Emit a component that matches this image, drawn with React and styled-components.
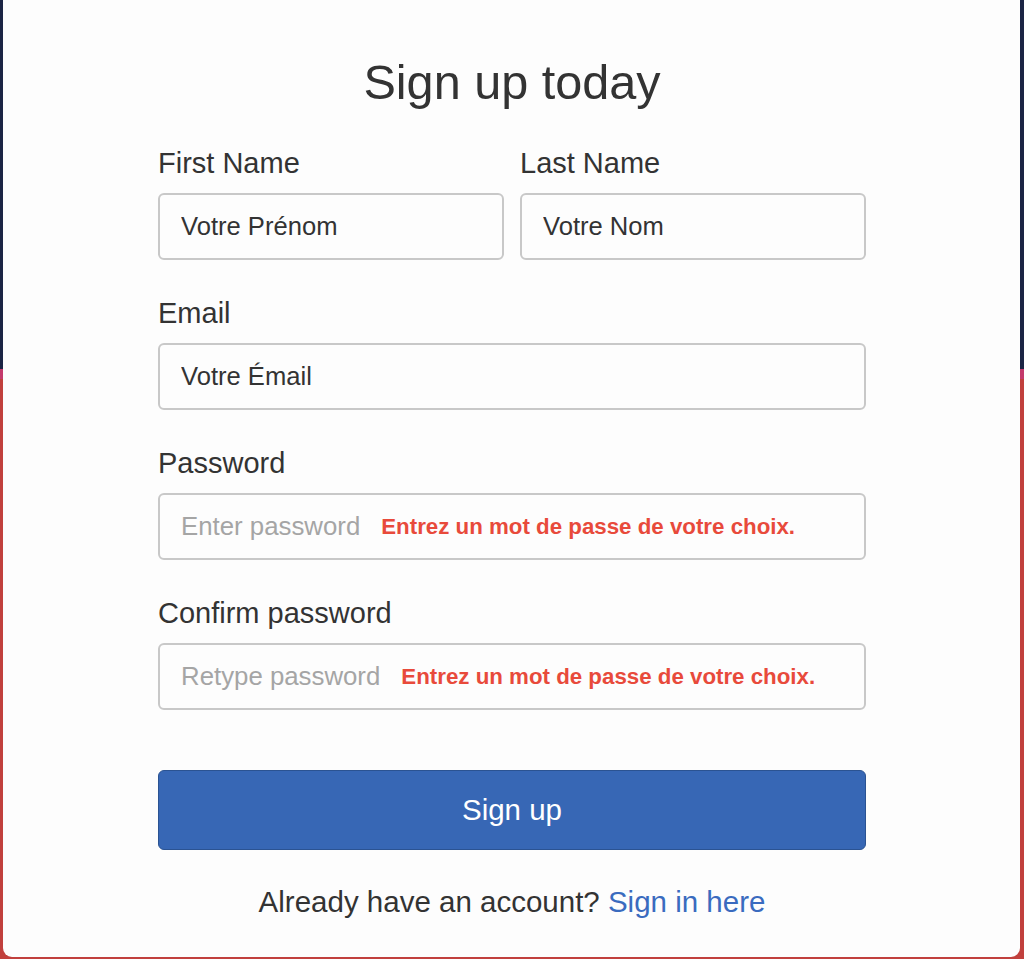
import React from "react"
import styled, { createGlobalStyle } from "styled-components"

const GlobalStyle = createGlobalStyle`
  html, body {
    margin: 0;
    padding: 0;
  }
  body {
    font-family: "Liberation Sans", Arial, Helvetica, sans-serif;
    background: linear-gradient(
      to bottom,
      #1b2444 0,
      #1b2444 369px,
      #c43a6c 369px,
      #c43a6c 379px,
      #c1403d 379px,
      #c1403d 100%
    );
    min-height: 959px;
  }
`

export default function App() {
  return (
    <>
      <GlobalStyle />
      <Page>
        <Card>
          <Title>Sign up today</Title>
          <Form onSubmit={(e) => e.preventDefault()}>
            <Row>
              <Group>
                <Label>First Name</Label>
                <Input readOnly defaultValue="Votre Prénom" />
              </Group>
              <Group>
                <Label>Last Name</Label>
                <Input readOnly defaultValue="Votre Nom" />
              </Group>
            </Row>

            <Group>
              <Label>Email</Label>
              <Input readOnly defaultValue="Votre Émail" />
            </Group>

            <Group>
              <Label>Password</Label>
              <FieldBox>
                <Placeholder>Enter password</Placeholder>
                <Error>Entrez un mot de passe de votre choix.</Error>
              </FieldBox>
            </Group>

            <Group>
              <Label>Confirm password</Label>
              <FieldBox>
                <Placeholder>Retype password</Placeholder>
                <Error>Entrez un mot de passe de votre choix.</Error>
              </FieldBox>
            </Group>

            <Button type="submit">Sign up</Button>
          </Form>
          <Footer>
            Already have an account? <Link href="#">Sign in here</Link>
          </Footer>
        </Card>
      </Page>
    </>
  )
}

const Page = styled.div`
  padding: 0 4px 2px 3px;
  width: 1024px;
  box-sizing: border-box;
`
const Card = styled.div`
  background: #fdfdfd;
  border-radius: 0 0 9px 9px;
  padding: 54px 154px 39px 155px;
  height: 957px;
  box-sizing: border-box;
  color: #333;
`
const Title = styled.h1`
  margin: 0 0 36px;
  font-size: 48.6px;
  font-weight: 400;
  line-height: 56px;
  text-align: center;
  color: #333;
`
const Form = styled.form`
  display: flex;
  flex-direction: column;
`
const Row = styled.div`
  display: grid;
  grid-template-columns: minmax(0, 1fr) minmax(0, 1fr);
  gap: 16px;
`
const Group = styled.div`
  display: flex;
  flex-direction: column;
  min-width: 0;
  margin-bottom: 36px;
`
const Label = styled.label`
  font-size: 29px;
  line-height: 34px;
  margin-bottom: 13px;
  color: #333;
`
const Input = styled.input`
  width: 100%;
  height: 67px;
  box-sizing: border-box;
  border: 2px solid #c8c8c8;
  border-radius: 6px;
  padding: 0 21px;
  font-family: inherit;
  font-size: 25.6px;
  color: #333;
  background: #fdfdfd;
  outline: none;
`
const FieldBox = styled.div`
  display: flex;
  align-items: center;
  gap: 21px;
  height: 67px;
  box-sizing: border-box;
  border: 2px solid #c8c8c8;
  border-radius: 6px;
  padding: 0 21px;
  background: #fdfdfd;
`
const Placeholder = styled.span`
  font-size: 25.8px;
  color: #a5a5a5;
`
const Error = styled.span`
  font-size: 22.3px;
  font-weight: 700;
  color: #e84a3b;
  padding-top: 1px;
`
const Button = styled.button`
  margin-top: 24px;
  height: 80px;
  border: 1px solid #2b5392;
  border-radius: 6px;
  background: #3767b5;
  color: #fff;
  font-family: inherit;
  font-size: 29.5px;
  cursor: pointer;
`
const Footer = styled.p`
  margin: 35px 0 0;
  font-size: 29.5px;
  line-height: 34px;
  text-align: center;
  color: #333;
`
const Link = styled.a`
  color: #3a6bbf;
  text-decoration: none;
`
